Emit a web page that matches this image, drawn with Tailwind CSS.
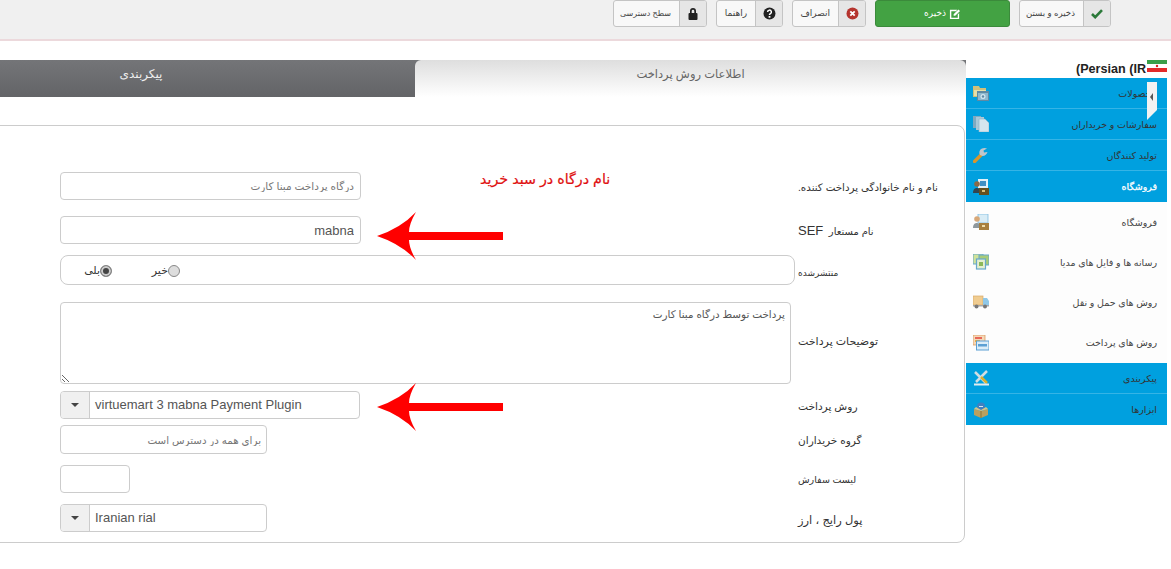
<!DOCTYPE html>
<html lang="fa">
<head>
    <meta charset="UTF-8">
    <meta name="viewport" content="width=device-width, initial-scale=1.0">
    <title>Payment Method</title>
    <script src="https://cdn.jsdelivr.net/npm/@tailwindcss/browser@4"></script>
</head>
<body class="bg-white h-[569px] w-[1171px] overflow-hidden relative text-[#333] text-[11px] [font-family:'Liberation_Sans','DejaVu_Sans',sans-serif]" dir="ltr">

    <!-- Toolbar -->
    <div class="h-[41px] bg-[#f0f0f0] border-b-2 border-[#ecd9dc] flex justify-end gap-[9px] pr-[60px]">
        <button class="flex h-[27px] w-[94px] rounded-[3px] border border-[#c4c4c4] overflow-hidden bg-[#f8f8f8]">
            <span class="flex-1 h-full flex items-center justify-end pr-[8px] text-[8px] text-[#444]" dir="ltr"><span dir="rtl">سطح دسترسی</span></span>
            <span class="w-[27px] h-full bg-[#e6e6e6] border-l border-[#c4c4c4] flex items-center justify-center">
                <svg width="12" height="13" viewBox="0 0 12 13"><path d="M3 6V4a3 3 0 0 1 6 0v2h-1.700V4a1.300 1.300 0 0 0-2.600 0v2z" fill="#222"/><rect x="1.500" y="6" width="9" height="7" rx="1" fill="#222"/></svg>
            </span>
        </button>
        <button class="flex h-[27px] w-[67px] rounded-[3px] border border-[#c4c4c4] overflow-hidden bg-[#f8f8f8]">
            <span class="flex-1 h-full flex items-center justify-end pr-[8px] text-[9px] text-[#444]"><span dir="rtl">راهنما</span></span>
            <span class="w-[27px] h-full bg-[#e6e6e6] border-l border-[#c4c4c4] flex items-center justify-center">
                <svg width="13" height="13" viewBox="0 0 13 13"><circle cx="6.500" cy="6.500" r="6" fill="#222"/><path d="M4.600 5a1.900 1.900 0 1 1 2.800 1.700c-.6.3-.9.6-.9 1.200" fill="none" stroke="#fff" stroke-width="1.500"/><rect x="5.600" y="9" width="1.800" height="1.700" fill="#fff"/></svg>
            </span>
        </button>
        <button class="flex h-[27px] w-[74px] rounded-[3px] border border-[#c4c4c4] overflow-hidden bg-[#f8f8f8]">
            <span class="flex-1 h-full flex items-center justify-end pr-[8px] text-[9px] text-[#444]"><span dir="rtl">انصراف</span></span>
            <span class="w-[27px] h-full bg-[#e6e6e6] border-l border-[#c4c4c4] flex items-center justify-center">
                <svg width="13" height="13" viewBox="0 0 13 13"><circle cx="6.500" cy="6.500" r="6" fill="#b5342e"/><path d="M4.300 4.300l4.400 4.400M8.700 4.300l-4.400 4.400" stroke="#fff" stroke-width="1.800"/></svg>
            </span>
        </button>
        <button class="flex h-[27px] w-[135px] rounded-[3px] border border-[#3b8a3b] bg-[#43a243] items-center justify-center gap-[3px] text-white text-[9px]">
            <span dir="rtl">ذخیره</span>
            <svg width="12" height="12" viewBox="0 0 13 13"><path d="M1 2h8L7.500 3.500H2.500v7h7V7L11 5.500V12H1z" fill="#fff"/><path d="M5 6.800l5.200-5.300 1.800 1.800-5.300 5.200H5z" fill="#fff"/></svg>
        </button>
        <button class="flex h-[27px] w-[92px] rounded-[3px] border border-[#c4c4c4] overflow-hidden bg-[#f8f8f8]">
            <span class="flex-1 h-full flex items-center justify-end pr-[8px] text-[8.600px] text-[#444]"><span dir="rtl">ذخیره و بستن</span></span>
            <span class="w-[27px] h-full bg-[#e6e6e6] border-l border-[#c4c4c4] flex items-center justify-center">
                <svg width="12" height="11" viewBox="0 0 12 11"><path d="M1 6l3.200 3.200L11 2.200" fill="none" stroke="#2c7a3a" stroke-width="2.600"/></svg>
            </span>
        </button>
    </div>

    <div class="flex items-start mt-[19px]">
        <!-- Main column -->
        <div class="w-[966px] shrink-0 overflow-hidden">
            <div class="h-[37px] flex bg-gradient-to-b from-[#747578] to-[#636467]">
                <div class="w-[415px] shrink-0 flex justify-center pr-[133px]">
                    <span class="mt-[6px] text-[12px] text-[#eee] leading-[16px]" dir="rtl">پیکربندی</span>
                </div>
                <div class="flex-1 rounded-t-[6px] bg-gradient-to-b from-[#dedede] to-white flex justify-center">
                    <span class="mt-[6px] text-[11.500px] text-[#666] leading-[16px]" dir="rtl">اطلاعات روش پرداخت</span>
                </div>
            </div>

            <div class="mt-[28px] -ml-[10px] w-[975px] h-[418px] border border-[#ccc] rounded-r-[8px] pl-[69px] pt-[46px]">
                <div class="flex items-start">
                    <div class="w-[738px] shrink-0">
                        <input dir="rtl" value="درگاه پرداخت مبنا کارت" class="block w-[301px] h-[28px] px-[6px] border border-[#ccc] rounded-[4px] text-[10.500px] text-[#777]">
                    </div>
                    <label dir="rtl" class="mt-[8px] leading-[16px] w-max text-[10.300px]">نام و نام خانوادگی پرداخت کننده.</label>
                </div>
                <div class="flex items-start mt-[16px]">
                    <div class="w-[738px] shrink-0">
                        <input dir="rtl" value="mabna" class="block w-[301px] h-[28px] px-[6px] border border-[#ccc] rounded-[4px] text-[13px] text-[#555]">
                    </div>
                    <label dir="rtl" class="mt-[7px] leading-[16px] w-max text-[10px]">نام مستعار&nbsp; <span class="text-[13px]">SEF</span></label>
                </div>
                <div class="flex items-start mt-[11px]">
                    <div class="w-[738px] shrink-0">
                        <div class="w-[735px] h-[30px] border border-[#ccc] rounded-[8px] flex items-center pl-[25px] pt-[1px]">
                            <span dir="rtl" class="w-[14px]">بلی</span>
                            <input type="radio" name="published" checked class="appearance-none w-[12px] h-[12px] rounded-full border border-[#888] bg-[#ddd] checked:bg-[#444] checked:shadow-[inset_0_0_0_2px_#ccc]">
                            <span dir="rtl" class="ml-[41px] w-[15px]">خیر</span>
                            <input type="radio" name="published" class="appearance-none w-[12px] h-[12px] rounded-full border border-[#888] bg-[#ddd]">
                        </div>
                    </div>
                    <label dir="rtl" class="mt-[10px] leading-[16px] w-max text-[9px]">منتشرشده</label>
                </div>
                <div class="flex items-start mt-[17px]">
                    <div class="w-[738px] shrink-0">
                        <textarea dir="rtl" class="block w-[731px] h-[82px] px-[5px] py-[4px] border border-[#ccc] rounded-[4px] text-[10.400px] text-[#555]">پرداخت توسط درگاه مبنا کارت</textarea>
                    </div>
                    <label dir="rtl" class="mt-[31px] leading-[16px] w-max">توضیحات پرداخت</label>
                </div>
                <div class="flex items-start mt-[7px]">
                    <div class="w-[738px] shrink-0">
                        <div class="flex w-[300px] h-[28px] border border-[#ccc] rounded-[4px] overflow-hidden">
                            <span class="w-[29px] h-full bg-[#f0f0f0] border-r border-[#ccc] flex items-center justify-center">
                                <svg width="8" height="4" viewBox="0 0 8 4"><path d="M0 0h8L4 4z" fill="#444"/></svg>
                            </span>
                            <span class="pl-[5px] leading-[26px] text-[13px] text-[#555]">virtuemart 3 mabna Payment Plugin</span>
                        </div>
                    </div>
                    <label dir="rtl" class="mt-[7px] leading-[16px] w-max text-[10.600px]">روش پرداخت</label>
                </div>
                <div class="flex items-start mt-[6px]">
                    <div class="w-[738px] shrink-0">
                        <input dir="rtl" value="برای همه در دسترس است" class="block w-[207px] h-[29px] px-[5px] border border-[#ccc] rounded-[4px] text-[10.300px] text-[#777]">
                    </div>
                    <label dir="rtl" class="mt-[7px] leading-[16px] w-max text-[10.500px]">گروه خریداران</label>
                </div>
                <div class="flex items-start mt-[11px]">
                    <div class="w-[738px] shrink-0">
                        <input class="block w-[70px] h-[28px] border border-[#ccc] rounded-[4px]">
                    </div>
                    <label dir="rtl" class="mt-[7px] leading-[16px] w-max text-[9.500px]">لیست سفارش</label>
                </div>
                <div class="flex items-start mt-[11px]">
                    <div class="w-[738px] shrink-0">
                        <div class="flex w-[207px] h-[28px] border border-[#ccc] rounded-[4px] overflow-hidden">
                            <span class="w-[29px] h-full bg-[#f0f0f0] border-r border-[#ccc] flex items-center justify-center">
                                <svg width="8" height="4" viewBox="0 0 8 4"><path d="M0 0h8L4 4z" fill="#444"/></svg>
                            </span>
                            <span class="pl-[5px] leading-[26px] text-[13px] text-[#555]">Iranian rial</span>
                        </div>
                    </div>
                    <label dir="rtl" class="mt-[8px] leading-[16px] w-max text-[11.500px]">پول رایج ، ارز</label>
                </div>
            </div>
        </div>

        <!-- Sidebar -->
        <div class="w-[201px] shrink-0">
            <div class="h-[18px] flex justify-end items-start">
                <span class="mt-[1px] text-[12.600px] font-bold leading-[16px] text-[#222]">(Persian (IR</span>
                <svg class="ml-[1px]" width="20" height="12" viewBox="0 0 20 12"><rect width="20" height="4" fill="#3a9f4a"/><rect y="4" width="20" height="4" fill="#fff"/><rect y="8" width="20" height="4" fill="#e22a2a"/><circle cx="10" cy="6" r="1.200" fill="#d22"/></svg>
            </div>
            <div class="w-[201px] text-[#333] text-[9.500px]">
                <div class="h-[31px] bg-[#00a0df] border-b border-[#35b4e6] flex items-center justify-between pl-[7px] pr-[10px]">
                    <svg width="16" height="16" viewBox="0 0 16 16"><path d="M0 1h6l1 2h6v9H0z" fill="#cfc07a"/><path d="M1 5h12v6H1z" fill="#e8dfa8"/><rect x="4" y="6" width="12" height="10" fill="#5f8aa4"/><rect x="5" y="8" width="10" height="7" fill="#8db8cf"/><circle cx="10" cy="11.500" r="2.500" fill="#d4e6f0"/><circle cx="10" cy="11.500" r="1.200" fill="#5f8aa4"/></svg>
                    <span dir="rtl" class="pt-[2px]">محصولات</span>
                </div>
                <div class="h-[31px] bg-[#00a0df] border-b border-[#35b4e6] flex items-center justify-between pl-[7px] pr-[10px]">
                    <svg width="16" height="16" viewBox="0 0 16 16"><rect x="0" y="0" width="8" height="12" fill="#7fa9c0"/><rect x="3" y="1" width="8" height="13" fill="#a9c8d8"/><path d="M6 3h6l4 4v9H6z" fill="#d4e5ee" stroke="#8fb4c8" stroke-width=".6"/></svg>
                    <span dir="rtl" class="pt-[2px]">سفارشات و خریداران</span>
                </div>
                <div class="h-[31px] bg-[#00a0df] border-b border-[#35b4e6] flex items-center justify-between pl-[7px] pr-[10px]">
                    <svg width="16" height="16" viewBox="0 0 16 16"><path d="M1.500 14.500L8 8" stroke="#d8962c" stroke-width="3.400" stroke-linecap="round"/><path d="M7 8a4.500 4.500 0 0 1 2-6.500c1.500-.8 3.500-.8 5 0l-3.500 2 .5 2 3.500-.5c-.5 2-2.500 4-5 4z" fill="#bfc6cc"/></svg>
                    <span dir="rtl" class="pt-[2px]">تولید کنندگان</span>
                </div>
                <div class="h-[31px] bg-[#00a0df] flex items-center justify-between pl-[7px] pr-[10px] text-white [-webkit-text-stroke:0.25px_#fff]">
                    <svg width="16" height="16" viewBox="0 0 16 16"><rect x="5" y="0" width="10" height="9" fill="#e2f0f8"/><rect x="7" y="2" width="6" height="5" fill="#3f8fc4"/><circle cx="4" cy="5" r="2.800" fill="#8a6a48"/><path d="M0 14c0-4 2-5 4-5s3 1 4 2v3z" fill="#33454f"/><rect x="6" y="9" width="10" height="7" fill="#65501f"/><rect x="9" y="11" width="3" height="2" fill="#d6be7c"/></svg>
                    <span dir="rtl" class="pt-[2px]">فروشگاه</span>
                </div>
                <div class="h-[161px] bg-[#fdfdfd] flex flex-col text-[#444]">
                    <div class="h-[40px] flex items-center justify-between pl-[7px] pr-[10px]">
                        <svg width="16" height="16" viewBox="0 0 16 16"><rect x="5" y="0" width="10" height="9" fill="#d8ecf6" stroke="#7fbce0" stroke-width=".8"/><circle cx="4" cy="5" r="2.800" fill="#d8a878"/><path d="M0 14c0-4 2-5 4-5s3 1 4 2v3z" fill="#8f989c"/><rect x="6" y="9" width="10" height="7" fill="#a8803f"/><rect x="9" y="11" width="3" height="2" fill="#f0dca8"/></svg>
                        <span dir="rtl" class="pt-[2px]">فروشگاه</span>
                    </div>
                    <div class="h-[40px] flex items-center justify-between pl-[7px] pr-[10px]">
                        <svg width="16" height="16" viewBox="0 0 16 16"><rect x="0" y="0" width="10" height="10" fill="#cfe39a" stroke="#68a8cc" stroke-width="1"/><rect x="6" y="1" width="10" height="10" fill="#a8cc78" stroke="#68a8cc" stroke-width="1"/><rect x="3.500" y="5" width="9" height="10" fill="#e4efd0" stroke="#68a8cc" stroke-width="1.200"/><rect x="6" y="8" width="4" height="4" fill="#8cb858"/></svg>
                        <span dir="rtl" class="pt-[2px]">رسانه ها و فایل های مدیا</span>
                    </div>
                    <div class="h-[40px] flex items-center justify-between pl-[7px] pr-[10px]">
                        <svg width="16" height="16" viewBox="0 0 16 16"><rect x="0" y="2" width="10" height="9" fill="#f0cc90" stroke="#d8a868" stroke-width=".7"/><path d="M10 4h4l2 3v4h-6z" fill="#90c8e8"/><rect x="0" y="11" width="16" height="1.500" fill="#a8a8a8"/><circle cx="3.500" cy="12.500" r="2" fill="#777"/><circle cx="12" cy="12.500" r="2" fill="#777"/></svg>
                        <span dir="rtl" class="pt-[2px]">روش های حمل و نقل</span>
                    </div>
                    <div class="h-[41px] flex items-center justify-between pl-[7px] pr-[10px]">
                        <svg width="16" height="16" viewBox="0 0 16 16"><rect x="0" y="0" width="12" height="10" fill="#f4d8b8" stroke="#dc9c60" stroke-width=".8"/><rect x="2" y="2" width="7" height="2" fill="#e86858"/><rect x="2" y="5" width="5" height="2" fill="#f0b040"/><rect x="3.500" y="6" width="12.500" height="9" fill="#dcedf8" stroke="#5ca0d4" stroke-width="1"/><rect x="5" y="9" width="9" height="2.500" fill="#5ca0d4"/></svg>
                        <span dir="rtl" class="pt-[2px]">روش های پرداخت</span>
                    </div>
                </div>
                <div class="h-[31px] bg-[#00a0df] border-b border-[#35b4e6] flex items-center justify-between pl-[7px] pr-[10px]">
                    <svg width="16" height="16" viewBox="0 0 16 16"><path d="M2 2l11 11" stroke="#d0dde2" stroke-width="2.500"/><path d="M14 1L3 12" stroke="#d0dde2" stroke-width="2.500"/><path d="M8 7l6 6" stroke="#d8b030" stroke-width="2.500"/><rect x="1" y="13.500" width="15" height="2" fill="#e4ecee"/></svg>
                    <span dir="rtl" class="pt-[2px]">پیکربندی</span>
                </div>
                <div class="h-[31px] bg-[#00a0df] flex items-center justify-between pl-[7px] pr-[10px]">
                    <svg width="16" height="16" viewBox="0 0 16 16"><circle cx="8" cy="4.500" r="4" fill="#4080c0"/><path d="M6 4.500h4" stroke="#d8e8f4"/><path d="M1 7l7 2 7-2v6l-7 3-7-3z" fill="#b8a060"/><path d="M8 9v7" stroke="#8a7438"/><path d="M1 7l2-2 5 3 5-3 2 2-7 2z" fill="#d6c488"/></svg>
                    <span dir="rtl" class="pt-[2px]">ابزارها</span>
                </div>
            </div>
        </div>
    </div>

    <!-- Sidebar toggle -->
    <svg class="absolute left-[1147px] top-[82px]" width="10" height="38" viewBox="0 0 10 38"><path d="M0 0h10v28L0 38z" fill="#f2f2f2"/><path d="M6 11l-3 4 3 4z" fill="#555"/></svg>

    <!-- Annotations drawn over the screenshot -->
    <span dir="rtl" class="absolute left-[480px] top-[169px] text-[14.300px] leading-[20px] text-[#e01010] [-webkit-text-stroke:0.2px_#e01010]">نام درگاه در سبد خرید</span>
    <svg class="absolute left-[377px] top-[212px]" width="126" height="48" viewBox="0 0 126 48"><path d="M0 24Q24 16 39 0Q32 12 32 20H126V28H32Q32 36 39 48Q24 32 0 24z" fill="#f00"/></svg>
    <svg class="absolute left-[377px] top-[383px]" width="126" height="48" viewBox="0 0 126 48"><path d="M0 24Q24 16 39 0Q32 12 32 20H126V28H32Q32 36 39 48Q24 32 0 24z" fill="#f00"/></svg>
</body>
</html>
